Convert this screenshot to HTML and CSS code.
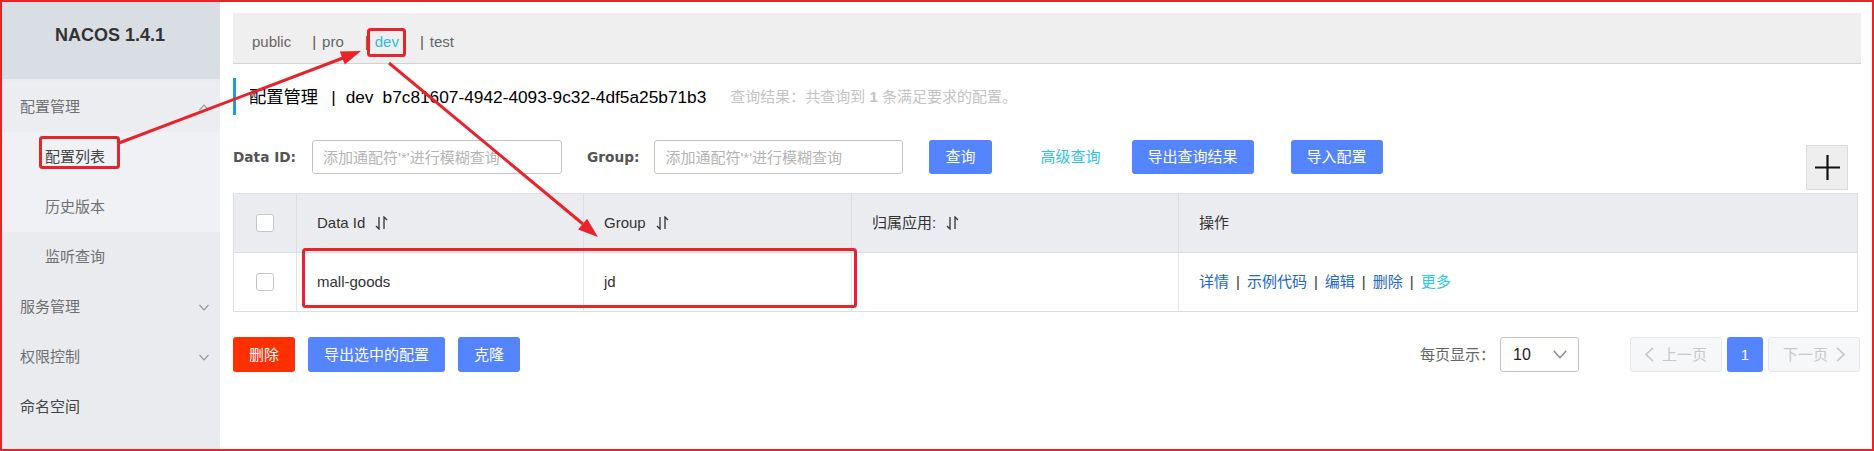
FILE: index.html
```html
<!DOCTYPE html>
<html lang="zh-CN">
<head>
<meta charset="utf-8">
<title>Nacos 配置管理</title>
<link rel="stylesheet" href="styles.css">
</head>
<body>
<div class="app">
  <aside class="sidebar">
    <div class="brand">NACOS 1.4.1</div>
    <nav class="nav">
      <div class="nav-row nav-open">配置管理
        <svg class="chev" width="10" height="7" viewBox="0 0 10 7"><polyline points="0.5,6 5,1.2 9.5,6"/></svg>
      </div>
      <div class="nav-row nav-sub nav-light nav-current">配置列表</div>
      <div class="nav-row nav-sub nav-light">历史版本</div>
      <div class="nav-row nav-sub">监听查询</div>
      <div class="nav-row">服务管理
        <svg class="chev" width="10" height="7" viewBox="0 0 10 7"><polyline points="0.5,1 5,5.8 9.5,1"/></svg>
      </div>
      <div class="nav-row">权限控制
        <svg class="chev" width="10" height="7" viewBox="0 0 10 7"><polyline points="0.5,1 5,5.8 9.5,1"/></svg>
      </div>
      <div class="nav-row nav-strong">命名空间</div>
    </nav>
  </aside>

  <main class="main">
    <div class="ns-bar">
      <span class="ns">public</span>
      <span class="ns"><i class="ns-sep">|</i>pro</span>
      <span class="ns"><i class="ns-sep">|</i><b class="ns-active">dev</b></span>
      <span class="ns"><i class="ns-sep">|</i>test</span>
    </div>

    <h1 class="page-title">
      <span>配置管理</span><span class="title-sep">|</span><span class="title-ns">dev</span><span>b7c81607-4942-4093-9c32-4df5a25b71b3</span>
      <span class="result">查询结果：共查询到 <b>1</b> 条满足要求的配置。</span>
    </h1>

    <div class="search">
      <label class="label">Data ID:</label>
      <input class="input input-first" type="text" placeholder="添加通配符'*'进行模糊查询">
      <label class="label label-group">Group:</label>
      <input class="input input-second" type="text" placeholder="添加通配符'*'进行模糊查询">
      <button class="btn btn-query">查询</button>
      <span class="link-btn">高级查询</span>
      <button class="btn btn-export">导出查询结果</button>
      <button class="btn btn-import">导入配置</button>
      <button class="add-btn" aria-label="新建">
        <svg width="25" height="25" viewBox="0 0 25 25"><path d="M12.5 0V25M0 12.5H25" stroke="#111" stroke-width="2.2"/></svg>
      </button>
    </div>

    <div class="grid">
      <div class="grid-row grid-head">
        <div class="cell cell-check"><span class="checkbox"></span></div>
        <div class="cell cell-id">Data Id
          <svg class="sort" width="13" height="14" viewBox="0 0 13 14"><path d="M4 1V13L1 10M9 13V1L12 4"/></svg>
        </div>
        <div class="cell cell-group">Group
          <svg class="sort" width="13" height="14" viewBox="0 0 13 14"><path d="M4 1V13L1 10M9 13V1L12 4"/></svg>
        </div>
        <div class="cell cell-app">归属应用:
          <svg class="sort" width="13" height="14" viewBox="0 0 13 14"><path d="M4 1V13L1 10M9 13V1L12 4"/></svg>
        </div>
        <div class="cell cell-op">操作</div>
      </div>
      <div class="grid-row grid-body">
        <div class="cell cell-check"><span class="checkbox"></span></div>
        <div class="cell cell-id">mall-goods</div>
        <div class="cell cell-group">jd</div>
        <div class="cell cell-app"></div>
        <div class="cell cell-op">
          <a class="op">详情</a><i class="op-sep">|</i><a class="op">示例代码</a><i class="op-sep">|</i><a class="op">编辑</a><i class="op-sep">|</i><a class="op">删除</a><i class="op-sep">|</i><a class="op op-more">更多</a>
        </div>
      </div>
    </div>

    <div class="footer">
      <button class="btn btn-danger">删除</button>
      <button class="btn btn-gap">导出选中的配置</button>
      <button class="btn btn-gap">克隆</button>

      <div class="paging">
        <span class="page-size-label">每页显示：</span>
        <div class="select"><span>10</span>
          <svg width="14" height="9" viewBox="0 0 14 9"><polyline points="0.8,0.8 7,7.6 13.2,0.8"/></svg>
        </div>
        <div class="pager">
          <span class="page-btn page-nav">
            <svg width="9" height="15" viewBox="0 0 9 15"><polyline points="8,0.8 1,7.5 8,14.2"/></svg>上一页
          </span>
          <span class="page-btn page-current">1</span>
          <span class="page-btn page-nav">下一页
            <svg width="9" height="15" viewBox="0 0 9 15"><polyline points="1,0.8 8,7.5 1,14.2"/></svg>
          </span>
        </div>
      </div>
    </div>
  </main>
</div>

<svg class="annot" width="1874" height="451" viewBox="0 0 1874 451">
  <rect class="frame" x="1" y="1" width="1872" height="449"/>
  <rect x="40.5" y="137.5" width="78" height="30" rx="2"/>
  <rect x="368.5" y="29.5" width="36" height="26" rx="2"/>
  <rect x="303.5" y="249.5" width="552" height="57" rx="2"/>
  <line x1="119" y1="143" x2="343" y2="58"/>
  <polygon points="361,51 344.8,64.6 339.8,51.6"/>
  <line x1="389" y1="63" x2="583" y2="224"/>
  <polygon points="598,237 578.1,229.6 587.1,218.8"/>
</svg>
</body>
</html>
```

FILE: styles.css
```css
* { box-sizing: border-box; }

html, body {
  margin: 0;
  padding: 0;
}

body {
  position: relative;
  width: 1874px;
  height: 451px;
  overflow: hidden;
  background: #fff;
  color: #333;
  font-family: "Liberation Sans", "Noto Sans CJK SC", sans-serif;
  font-size: 15px;
  line-height: 20px;
}

.app {
  display: flex;
  height: 451px;
}

/* ---------- sidebar ---------- */
.sidebar {
  flex: none;
  width: 220px;
  background: #e9ebef;
}

.brand {
  height: 79px;
  padding-bottom: 9px;
  display: flex;
  align-items: center;
  justify-content: center;
  background: #d9dde4;
  color: #333;
  font-weight: bold;
  font-size: 18px;
}

.nav {
  padding-top: 3px;
}

.nav-row {
  height: 50px;
  display: flex;
  align-items: center;
  padding: 0 11px 0 20px;
  color: #707070;
}

.nav-open {
  background: #ebedf1;
}

.nav-sub {
  padding-left: 45px;
}

.nav-light {
  background: #f0f1f4;
}

.nav-current {
  color: #444;
}

.nav-strong {
  color: #444;
}

.chev {
  margin-left: auto;
  fill: none;
  stroke: #999;
  stroke-width: 1.2;
}

/* ---------- main ---------- */
.main {
  flex: 1;
  min-width: 0;
  padding: 13px 13px 0 13px;
}

.ns-bar {
  height: 51px;
  padding: 8px 0 0 19px;
  display: flex;
  align-items: center;
  background: #efefef;
  border-bottom: 1px solid #d2d2d2;
  color: #666;
}

.ns {
  margin-right: 21px;
}

.ns-sep {
  font-style: normal;
  margin-right: 6px;
  color: #555;
}

.ns-active {
  font-weight: normal;
  color: #2ebde6;
}

.page-title {
  margin: 14px 0 0 0;
  height: 37px;
  padding-left: 13px;
  border-left: 3px solid #1f9be0;
  display: flex;
  align-items: center;
  font-size: 17.3px;
  font-weight: normal;
  color: #000;
  white-space: nowrap;
}

.title-sep {
  margin: 0 10px 0 13px;
}

.title-ns {
  margin-right: 9px;
}

.result {
  margin-left: 24px;
  font-size: 15px;
  color: #c4c4c4;
}

.result b {
  font-weight: bold;
}

/* ---------- search ---------- */
.search {
  margin-top: 25px;
  display: flex;
  align-items: flex-start;
}

.label {
  height: 34px;
  line-height: 34px;
  font-family: "DejaVu Sans", sans-serif;
  font-weight: bold;
  font-size: 13.7px;
  color: #555;
}

.label-group {
  margin-left: 25px;
}

.input {
  width: 250px;
  height: 34px;
  padding: 0 10px;
  border: 1px solid #c4c6cf;
  border-radius: 3px;
  font-family: inherit;
  font-size: 15px;
  color: #333;
  outline: none;
}

.input::placeholder {
  color: #b5b5b5;
}

.input-first {
  margin-left: 16px;
}

.input-second {
  margin-left: 15px;
  width: 249px;
}

.btn {
  height: 34px;
  padding: 0 16px;
  border: none;
  border-radius: 3px;
  background: #5584ff;
  color: #fff;
  font-family: inherit;
  font-size: 15px;
  line-height: 34px;
  white-space: nowrap;
}

.btn-query { margin-left: 26px; }
.btn-export { margin-left: 31px; }
.btn-import { margin-left: 37px; }

.link-btn {
  margin-left: 49px;
  height: 34px;
  line-height: 34px;
  color: #2fc3e6;
}

.add-btn {
  margin: 5px 13px 0 auto;
  width: 42px;
  height: 45px;
  padding: 0;
  display: flex;
  align-items: center;
  justify-content: center;
  background: #eee;
  border: 1px solid #dcdcdc;
}

/* ---------- grid ---------- */
.grid {
  margin-top: 3px;
  width: 1625px;
  border: 1px solid #dcdee3;
}

.grid-row {
  display: flex;
  height: 58px;
}

.grid-head {
  height: 59px;
  background: #ebecf0;
  border-bottom: 1px solid #dcdee3;
}

.cell {
  display: flex;
  align-items: center;
  padding-left: 20px;
  border-left: 1px solid #dcdee3;
  white-space: nowrap;
}

.grid-body .cell {
  border-left-color: #e6e7eb;
}

.cell-check {
  width: 62px;
  padding-left: 0;
  justify-content: center;
  border-left: none;
}

.grid-body .cell-check {
  border-left: none;
}

.cell-id { width: 287px; }
.cell-group { width: 268px; }
.cell-app { width: 327px; }
.cell-op { width: 679px; }

.checkbox {
  width: 18px;
  height: 18px;
  border: 1px solid #c4c6cf;
  border-radius: 3px;
  background: #fff;
}

.sort {
  margin-left: 10px;
  fill: none;
  stroke: #333;
  stroke-width: 1.3;
}

.op {
  color: #2166d4;
}

.op-more {
  color: #33c6e6;
}

.op-sep {
  font-style: normal;
  margin: 0 7px;
  color: #333;
}

/* ---------- footer ---------- */
.footer {
  margin-top: 25px;
  display: flex;
  align-items: center;
}

.footer .btn {
  height: 35px;
  line-height: 35px;
}

.btn-danger {
  background: #ff3000;
}

.btn-gap {
  margin-left: 13px;
}

.paging {
  margin-left: auto;
  margin-right: 1px;
  display: flex;
  align-items: center;
}

.page-size-label {
  color: #666;
}

.select {
  margin-left: 5px;
  width: 79px;
  height: 35px;
  padding: 0 11px 0 12px;
  display: flex;
  align-items: center;
  justify-content: space-between;
  border: 1px solid #c4c6cf;
  border-radius: 3px;
  font-size: 16px;
  color: #222;
}

.select svg {
  fill: none;
  stroke: #888;
  stroke-width: 1.4;
}

.pager {
  margin-left: 51px;
  display: flex;
  gap: 5px;
}

.page-btn {
  height: 35px;
  display: flex;
  align-items: center;
  justify-content: center;
  border-radius: 3px;
}

.page-nav {
  width: 92px;
  gap: 8px;
  background: #f6f7f9;
  border: 1px solid #e6e7eb;
  color: #c8c8c8;
}

.page-nav svg {
  fill: none;
  stroke: #c8c8c8;
  stroke-width: 1.6;
}

.page-current {
  width: 36px;
  background: #5584ff;
  color: #fff;
}

/* ---------- annotations ---------- */
.annot {
  position: absolute;
  top: 0;
  left: 0;
  pointer-events: none;
}

.annot rect,
.annot line {
  fill: none;
  stroke: #e8232b;
  stroke-width: 3;
}

.annot .frame {
  stroke-width: 2;
}

.annot polygon {
  fill: #e8232b;
}
```
